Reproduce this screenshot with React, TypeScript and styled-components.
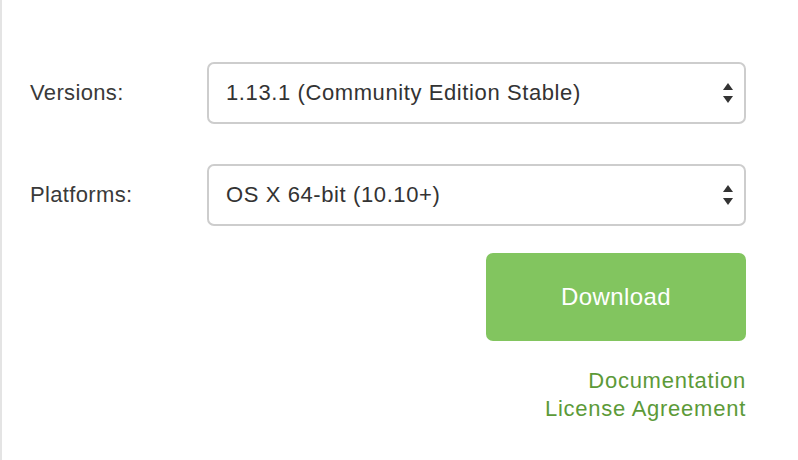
import React from "react";
import styled, { createGlobalStyle } from "styled-components";

const Global = createGlobalStyle`
  html, body { margin: 0; padding: 0; background: #ffffff; }
  body { font-family: "Liberation Sans", Arial, Helvetica, sans-serif; }
`;

const Page = styled.div`
  box-sizing: border-box;
  width: 798px;
  height: 460px;
  border-left: 2px solid #e4e4e4;
  padding: 62px 52px 0 28px;
`;

const Form = styled.div`
  display: grid;
  grid-template-columns: 177px 539px;
  row-gap: 40px;
  align-items: center;
`;

const Label = styled.div`
  font-size: 22px;
  letter-spacing: 0.35px;
  color: #3a3a3a;
`;

const SelectBox = styled.div`
  box-sizing: border-box;
  height: 62px;
  border: 2px solid #cdcdcd;
  border-radius: 7px;
  display: flex;
  align-items: center;
  justify-content: space-between;
  padding: 0 10px 0 17px;
  font-size: 22px;
  letter-spacing: 0.6px;
  color: #333333;
  background: #fff;
`;

const Actions = styled.div`
  display: flex;
  flex-direction: column;
  align-items: flex-end;
  width: 716px;
  margin-top: 27px;
`;

const DownloadButton = styled.button`
  width: 260px;
  height: 88px;
  border: none;
  border-radius: 7px;
  background: #82c55f;
  color: #ffffff;
  font-family: "Liberation Sans", Arial, Helvetica, sans-serif;
  font-size: 24px;
  letter-spacing: 0.4px;
  cursor: pointer;
`;

const Links = styled.div`
  display: flex;
  flex-direction: column;
  align-items: flex-end;
  margin-top: 26px;
`;

const LinkText = styled.a`
  font-size: 22px;
  letter-spacing: 0.75px;
  line-height: 28px;
  color: #5c9a38;
  text-decoration: none;
`;

const Arrows = () => (
  <svg width="12" height="22" viewBox="0 0 12 22">
    <path d="M6 1 L11 8 L1 8 Z" fill="#333" />
    <path d="M6 21 L11 14 L1 14 Z" fill="#333" />
  </svg>
);

export default function App() {
  return (
    <>
      <Global />
      <Page>
        <Form>
          <Label>Versions:</Label>
          <SelectBox>
            <span>1.13.1 (Community Edition Stable)</span>
            <Arrows />
          </SelectBox>
          <Label>Platforms:</Label>
          <SelectBox>
            <span>OS X 64-bit (10.10+)</span>
            <Arrows />
          </SelectBox>
        </Form>
        <Actions>
          <DownloadButton>Download</DownloadButton>
          <Links>
            <LinkText href="#">Documentation</LinkText>
            <LinkText href="#">License Agreement</LinkText>
          </Links>
        </Actions>
      </Page>
    </>
  );
}
